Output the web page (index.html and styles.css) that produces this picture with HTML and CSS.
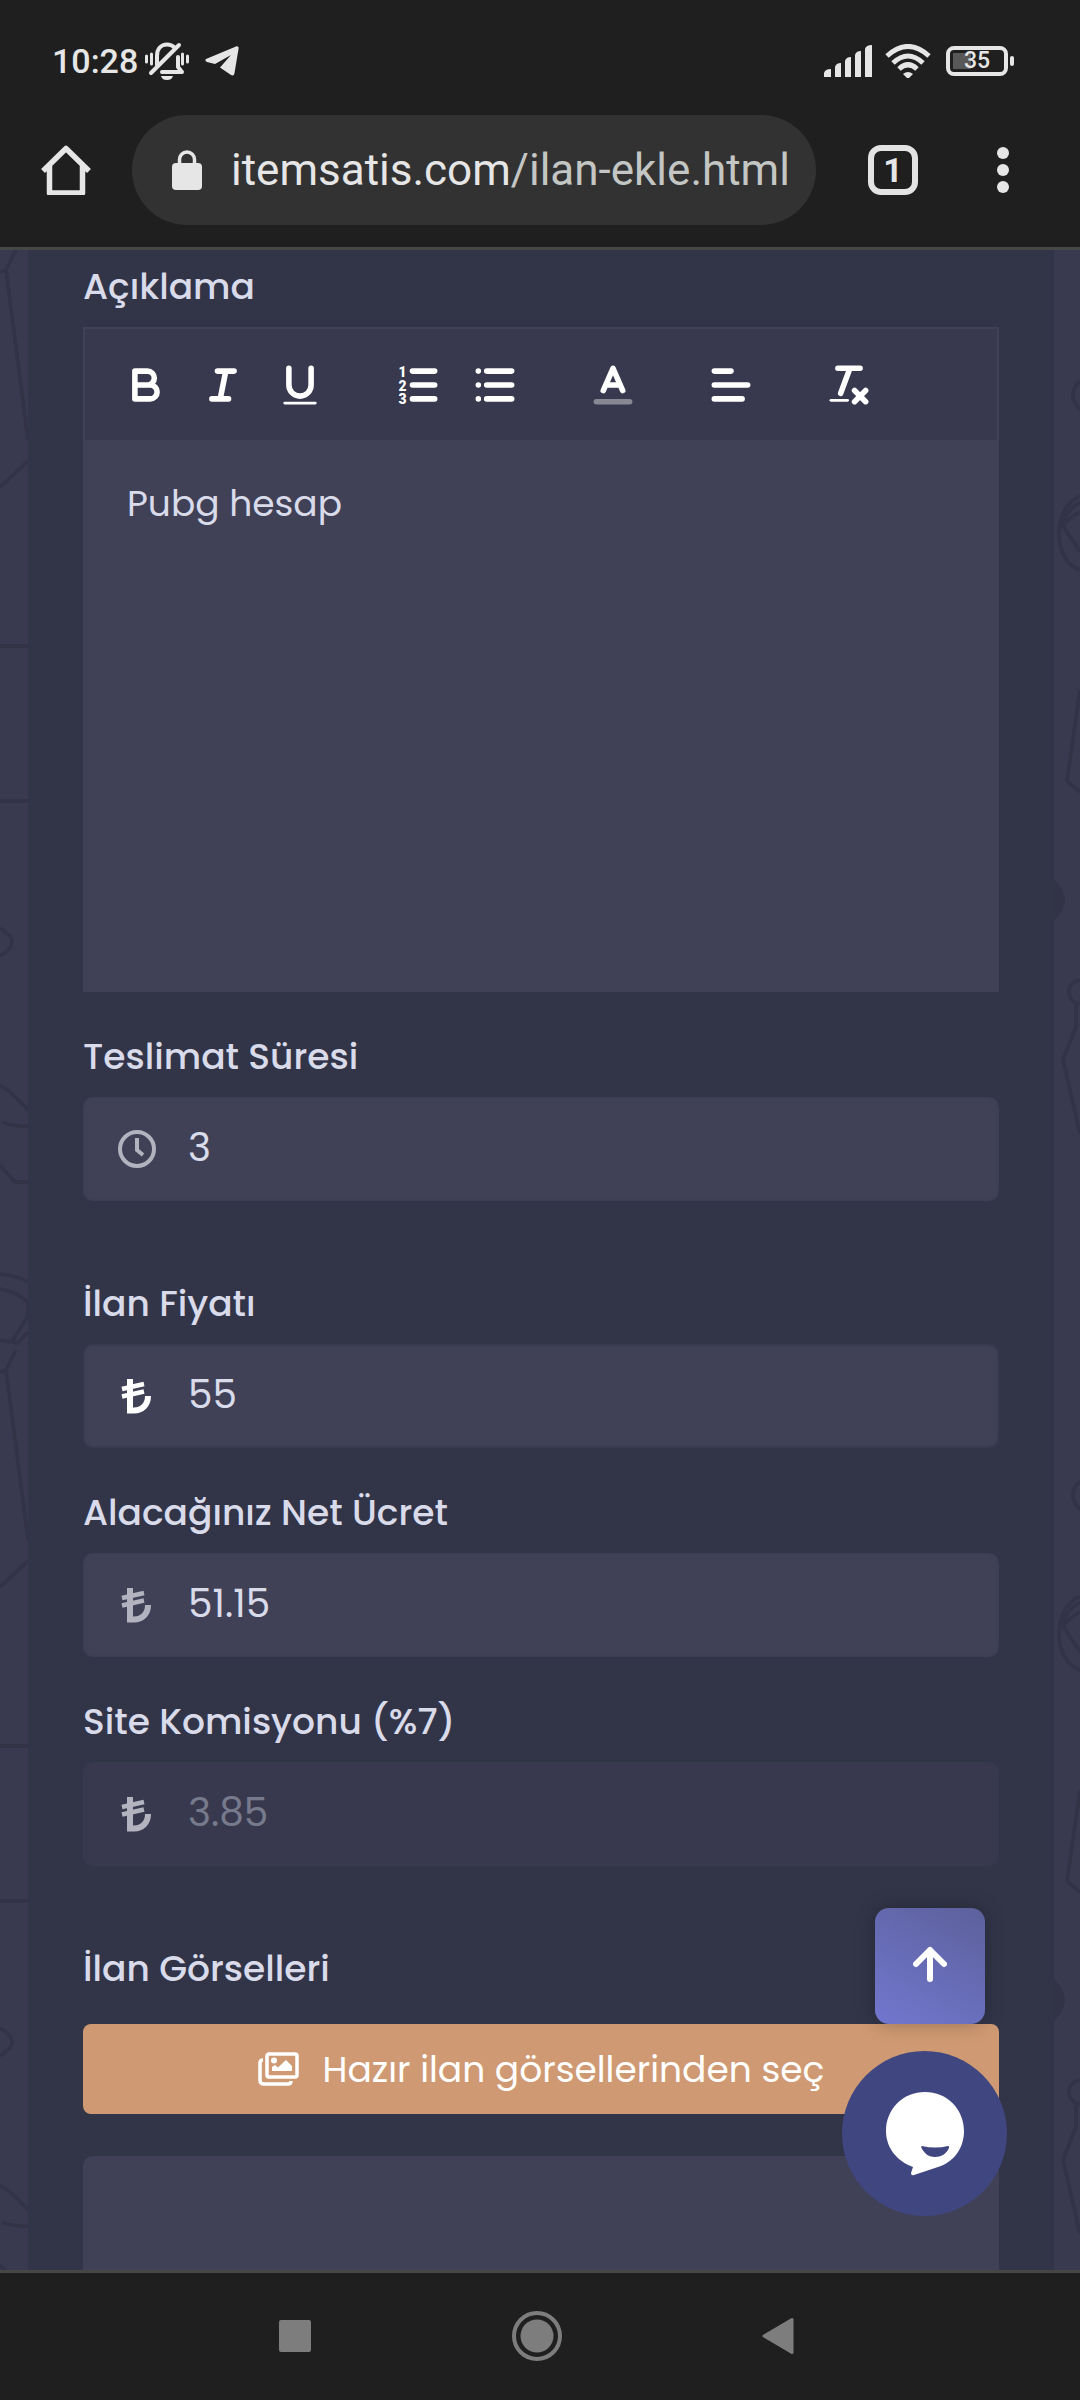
FILE: index.html
```html
<!DOCTYPE html>
<html lang="tr">
<head>
    <meta charset="UTF-8">
    <meta name="viewport" content="width=device-width, initial-scale=1.0">
    <title>İlan Ekle</title>
    <link rel="stylesheet" href="styles.css">
</head>
<body>
    <header class="browser">
        <div class="status-bar">
            <span class="clock">10:28</span>
            <svg class="bell" viewBox="0 0 44 38" width="44" height="38">
                <g fill="none" stroke="currentColor" stroke-width="4" stroke-linecap="round" stroke-linejoin="round">
                    <path d="M12 23V14C12 7 16 2.500 22 2.500C25 2.500 27.500 3.500 29.500 5.500"/>
                    <path d="M6 31L34 3"/>
                    <path d="M17 30H37L33 25V15"/>
                    <path d="M1.500 14V20M6.500 12V22M37.500 12V22M42.500 14V20" stroke-width="3"/>
                </g>
                <path d="M16 34H28C27 37 25 38 22 38S17 37 16 34Z" fill="currentColor"/>
            </svg>
            <svg class="telegram" viewBox="0 0 34 30" width="34" height="30">
                <path d="M1 13L31 .5C33 0 34 1 33.500 3L29.500 27C29 29.500 28 30 26 29L15 21.500L26 9L10 18L2 16C0 15 0 14 1 13Z" fill="currentColor"/>
            </svg>
            <svg class="signal" viewBox="0 0 48 32" width="48" height="32">
                <path d="M0 32V28Q1 24 7 24V32ZM11 32V22Q12 18 17 18V32ZM21 32V16Q22 12 27 12V32ZM31 32V10Q32 6 37 6V32ZM41 32V4Q42 0 48 0V32Z" fill="currentColor"/>
            </svg>
            <svg class="wifi" viewBox="0 0 46 34" width="46" height="34">
                <path d="M2 12Q23-7 44 12M8 19Q23 5 38 19M14 25Q23 16.500 32 25" fill="none" stroke="currentColor" stroke-width="5"/>
                <path d="M18 30Q23 26 28 30L23 35Z" fill="currentColor"/>
            </svg>
            <span class="battery"><span class="battery-text">35</span></span>
        </div>
        <nav class="url-bar">
            <a href="#" aria-label="Ana sayfa">
                <svg viewBox="0 0 50 50" width="50" height="50">
                    <path d="M2 26L25 3.500L48 26M8.500 21V48H41.500V21" fill="none" stroke="currentColor" stroke-width="5.500" stroke-linejoin="round"/>
                </svg>
            </a>
            <a href="#" class="address">
                <svg viewBox="0 0 30 40" width="30" height="40">
                    <rect y="13" width="30" height="27" rx="4" fill="currentColor"/>
                    <path d="M7.500 14V9.500a7.500 7.500 0 0 1 15 0V14" fill="none" stroke="currentColor" stroke-width="3.500"/>
                </svg>
                <span>itemsatis.com<span class="path">/ilan-ekle.html</span></span>
            </a>
            <button type="button" class="tabs">1</button>
            <button type="button" class="more" aria-label="Menü">
                <svg viewBox="0 0 12 46" width="12" height="46" fill="currentColor">
                    <circle cx="6" cy="6" r="6"/>
                    <circle cx="6" cy="23" r="6"/>
                    <circle cx="6" cy="40" r="6"/>
                </svg>
            </button>
        </nav>
    </header>

    <main class="page">
        <svg class="side side-left" aria-hidden="true">
            <defs>
                <pattern id="doodle-left" width="28" height="1100" patternUnits="userSpaceOnUse">
                    <path d="M16 0L6 20L0 22M6 20L28 190M0 237L28 211M0 396H28M0 551H28M0 678Q24 692 0 706M0 836Q8 838 28 860M2 872Q14 877 28 876M0 915L15 932H28M0 1024Q18 1026 28 1032M0 1039Q18 1042 28 1053V1066L11 1093M0 1090L18 1093L28 1082"/>
                </pattern>
            </defs>
            <rect width="100%" height="100%" fill="url(#doodle-left)"/>
        </svg>

        <form class="panel">
            <div class="field">
                <label for="description">Açıklama</label>
                <div class="editor">
                    <div class="toolbar">
                        <div class="tools">
                            <button type="button" aria-label="Kalın">
                                <svg viewBox="0 0 18 18"><path d="M5 4H9.500a2.500 2.500 0 0 1 0 5H5ZM5 9H10.500a2.500 2.500 0 0 1 0 5H5Z"/></svg>
                            </button>
                            <button type="button" aria-label="İtalik">
                                <svg viewBox="0 0 18 18"><path d="M7 4H13M5 14H11M8 14L10 4"/></svg>
                            </button>
                            <button type="button" aria-label="Altı çizili">
                                <svg viewBox="0 0 18 18"><path d="M5 3V9a4 4 0 0 0 8 0V3"/><rect x="3" y="15" width="12" height="1" rx=".5"/></svg>
                            </button>
                        </div>
                        <div class="tools">
                            <button type="button" aria-label="Numaralı liste">
                                <svg viewBox="0 0 18 18"><path d="M7 4H15M7 9H15M7 14H15"/><text x="2" y="6">1</text><text x="2" y="11">2</text><text x="2" y="16">3</text></svg>
                            </button>
                            <button type="button" aria-label="Liste">
                                <svg viewBox="0 0 18 18"><path d="M6 4H15M6 9H15M6 14H15M3 4H3M3 9H3M3 14H3"/></svg>
                            </button>
                        </div>
                        <div class="tools">
                            <button type="button" aria-label="Renk">
                                <svg viewBox="0 0 18 18"><path d="M3 15H15" opacity=".4"/><path d="M5.500 11L9 3L12.500 11M11.630 9H6.380"/></svg>
                            </button>
                        </div>
                        <div class="tools">
                            <button type="button" aria-label="Hizala">
                                <svg viewBox="0 0 18 18"><path d="M3 4H9M3 9H15M3 14H13"/></svg>
                            </button>
                        </div>
                        <div class="tools">
                            <button type="button" aria-label="Biçimi temizle">
                                <svg viewBox="0 0 18 18"><path d="M5 3H13M6 12L9.350 3M11 11L15 15M15 11L11 15"/><rect x="2" y="14" width="7" height="1" rx=".5"/></svg>
                            </button>
                        </div>
                    </div>
                    <textarea id="description">Pubg hesap</textarea>
                </div>
            </div>

            <div class="field">
                <label for="delivery">Teslimat Süresi</label>
                <div class="input-box">
                    <svg viewBox="0 0 38 38" width="38" height="38">
                        <circle cx="19" cy="19" r="17" fill="none" stroke="currentColor" stroke-width="4"/>
                        <path d="M19 8V20L25 25" fill="none" stroke="currentColor" stroke-width="4"/>
                    </svg>
                    <input type="text" id="delivery" value="3">
                </div>
            </div>

            <div class="field spaced">
                <label for="price">İlan Fiyatı</label>
                <div class="input-box active">
                    <svg viewBox="-4 -2 38 38" width="38" height="38"><use href="#lira"/></svg>
                    <input type="text" id="price" value="55">
                </div>
            </div>

            <div class="field">
                <label for="net">Alacağınız Net Ücret</label>
                <div class="input-box">
                    <svg viewBox="-4 -2 38 38" width="38" height="38"><use href="#lira"/></svg>
                    <input type="text" id="net" value="51.15">
                </div>
            </div>

            <div class="field">
                <label for="commission">Site Komisyonu (%7)</label>
                <div class="input-box disabled">
                    <svg viewBox="-4 -2 38 38" width="38" height="38"><use href="#lira"/></svg>
                    <input type="text" id="commission" value="3.85" disabled>
                </div>
            </div>

            <div class="field spaced images">
                <h2>İlan Görselleri</h2>
                <button type="button" class="pick-image">
                    <svg viewBox="0 0 41 34" width="41" height="34">
                        <rect x="9" y="2" width="30" height="23" rx="2" fill="none" stroke="currentColor" stroke-width="3.500"/>
                        <path d="M5 8Q2 8 2 11V28Q2 32 6 32H30Q33 32 33 29" fill="none" stroke="currentColor" stroke-width="3.500"/>
                        <circle cx="16" cy="8.500" r="3" fill="currentColor"/>
                        <path d="M14 19V15L17 13L20 15.500L28 8L34 14V19Z" fill="currentColor"/>
                    </svg>
                    Hazır ilan görsellerinden seç
                </button>
                <div class="dropzone"></div>
            </div>
        </form>

        <svg class="side side-right" aria-hidden="true">
            <defs>
                <pattern id="doodle-right" width="26" height="1100" patternUnits="userSpaceOnUse">
                    <path d="M26 131Q12 144 26 160M26 246Q5 256 5 286Q7 313 26 320M26 252Q10 262 9 276L26 302M26 262Q15 268 9 276M26 440L13 531L26 542M26 730Q14 733 15 743Q16 753 26 754M22 754V777L9 810L26 884"/>
                    <path class="filled" d="M0 632Q18 650 0 668Z"/>
                </pattern>
            </defs>
            <rect width="100%" height="100%" fill="url(#doodle-right)"/>
        </svg>

        <a href="#" class="to-top" aria-label="Yukarı çık">
            <svg viewBox="0 0 34 36" width="34" height="36">
                <path d="M17 33V4M3 18L17 4L31 18" fill="none" stroke="currentColor" stroke-width="6" stroke-linecap="round" stroke-linejoin="round"/>
            </svg>
        </a>
        <button type="button" class="chat" aria-label="Canlı destek">
            <svg viewBox="0 0 78 84" width="78" height="84">
                <path d="M39 0C61 0 78 17 78 39C78 56 68 69 55 74L28 83Q25 84 25 81L27 75C11 69 0 56 0 39C0 17 17 0 39 0Z" fill="currentColor"/>
                <path d="M36 54Q49 57 62 54Q64 54 62.500 57C60 62 55 65 49 65S39 62 36 57Q34.500 54 36 54Z" fill="#404680"/>
            </svg>
        </button>
    </main>

    <nav class="system-nav">
        <button type="button" aria-label="Son uygulamalar">
            <svg viewBox="0 0 50 50"><rect x="9" y="9" width="32" height="32" rx="2"/></svg>
        </button>
        <button type="button" aria-label="Ana ekran">
            <svg viewBox="0 0 50 50"><circle cx="25" cy="25" r="16.500"/><circle cx="25" cy="25" r="23" fill="none" stroke="currentColor" stroke-width="4"/></svg>
        </button>
        <button type="button" aria-label="Geri">
            <svg viewBox="0 0 50 50"><path d="M10 25L38 8.500V41.500Z" stroke="currentColor" stroke-width="3" stroke-linejoin="round"/></svg>
        </button>
    </nav>

    <svg width="0" height="0" class="sprites">
        <symbol id="lira" overflow="visible">
            <path d="M8 0V31.500H12C20 31.500 26 26 26 17" fill="none" stroke="currentColor" stroke-width="6"/>
            <path d="M0 10L22 5M0 17.500L22 12.500" fill="none" stroke="currentColor" stroke-width="4.500"/>
        </symbol>
    </svg>
</body>
</html>
```
FILE: styles.css
```css
* {
    margin: 0;
    padding: 0;
    box-sizing: border-box;
}

body {
    display: flex;
    flex-direction: column;
    height: 100vh;
    background: #393a4f;
    color: #d9dbea;
    font-family: "Poppins", Inter, sans-serif;
    font-size: 36px;
    overflow: hidden;
}

button,
input,
textarea {
    font-family: inherit;
    font-size: inherit;
    color: inherit;
    background: none;
    border: none;
    outline: none;
}

a {
    color: inherit;
    text-decoration: none;
}

svg {
    display: block;
    flex-shrink: 0;
}

.sprites {
    position: absolute;
}

/* Browser */
.browser {
    background: #1f1f1f;
    border-bottom: 3px solid #464846;
    color: #e6e6e6;
    font-family: Roboto, sans-serif;
}

.status-bar {
    display: flex;
    align-items: center;
    height: 115px;
    padding: 6px 66px 0 52px;
}

.clock {
    font-size: 34px;
    font-weight: 500;
}

.bell {
    margin-left: 7px;
}

.telegram {
    margin-left: 16px;
}

.signal {
    margin-left: auto;
}

.wifi {
    margin: 0 15px 0 13px;
}

.battery {
    position: relative;
    display: flex;
    align-items: center;
    justify-content: center;
    width: 62px;
    height: 30px;
    margin-right: 6px;
    border: 4px solid #e6e6e6;
    border-radius: 8px;
    background: linear-gradient(90deg, #585858 18px, transparent 18px) 3px 3px / 48px 16px no-repeat;
    font-size: 23px;
    font-weight: 500;
}

.battery::after {
    content: "";
    position: absolute;
    right: -10px;
    top: 6px;
    width: 4px;
    height: 10px;
    border-radius: 2px;
    background: #e6e6e6;
}

.url-bar {
    display: flex;
    align-items: center;
    padding: 0 71px 22px 41px;
}

.address {
    display: flex;
    flex: 1;
    align-items: center;
    gap: 29px;
    height: 110px;
    margin: 0 52px 0 41px;
    padding-left: 40px;
    border-radius: 55px;
    background: #323232;
    font-size: 44px;
    white-space: nowrap;
}

.path {
    color: #c4c6c4;
}

.tabs {
    width: 50px;
    height: 50px;
    margin-right: 79px;
    border: 6px solid #e3e3e3;
    border-radius: 13px;
    font-size: 34px;
    font-weight: 700;
    line-height: 38px;
}

/* Page */
.page {
    position: relative;
    display: flex;
    flex: 1;
    min-height: 0;
    overflow: hidden;
}

.side {
    height: 100%;
}

.side-left {
    width: 28px;
}

.side-right {
    width: 26px;
}

.side path {
    fill: none;
    stroke: #323347;
    stroke-width: 4;
}

.side .filled {
    fill: #323347;
}

.panel {
    display: flex;
    flex: 1;
    flex-direction: column;
    gap: 38px;
    padding: 10px 55px 0;
    background: #323548;
}

.spaced {
    margin-top: 38px;
}

label,
h2 {
    display: block;
    margin-bottom: 13px;
    font-size: 36px;
    font-weight: 500;
    line-height: 54px;
}

.editor {
    display: flex;
    flex-direction: column;
    height: 665px;
    border: 2px solid #404156;
    background: #404156;
}

.toolbar {
    display: flex;
    align-items: center;
    gap: 41px;
    height: 111px;
    padding: 0 22px;
    background: #38394e;
}

.tools {
    display: flex;
}

.tools button {
    display: flex;
    justify-content: center;
    width: 77px;
    color: #fff;
}

.tools svg {
    width: 50px;
    height: 50px;
    fill: none;
    stroke: currentColor;
    stroke-width: 2;
    stroke-linecap: round;
    stroke-linejoin: round;
}

.tools rect,
.tools text {
    fill: currentColor;
    stroke: none;
}

.tools text {
    font-family: Roboto, sans-serif;
    font-size: 5px;
    font-weight: 900;
}

textarea {
    flex: 1;
    padding: 37px 42px;
    line-height: 54px;
    resize: none;
}

.input-box {
    display: flex;
    align-items: center;
    gap: 32px;
    height: 104px;
    padding: 0 33px;
    border: 2px solid #3d3f54;
    border-radius: 10px;
    background: #404156;
    color: #b3b3bf;
}

.input-box input {
    flex: 1;
    min-width: 0;
    padding-bottom: 4px;
    color: #d9dbea;
    font-size: 39px;
}

.input-box.active {
    border-color: #393b50;
    color: #fff;
}

.input-box.disabled {
    border-color: #37394d;
    background: #38394e;
}

.input-box.disabled input {
    color: #777a8d;
}

.images {
    display: flex;
    flex: 1;
    flex-direction: column;
}

.images h2 {
    margin-bottom: 28px;
}

.pick-image {
    position: relative;
    display: flex;
    align-items: center;
    justify-content: center;
    gap: 24px;
    height: 90px;
    border-radius: 8px;
    background: #cf9a73;
    color: #fff;
}

.dropzone {
    flex: 1;
    margin-top: 42px;
    border-radius: 10px 10px 0 0;
    background: #404156;
}

/* Floating buttons */
.to-top,
.chat {
    position: absolute;
    display: flex;
    align-items: center;
    justify-content: center;
    color: #fff;
}

.to-top {
    right: 95px;
    bottom: 246px;
    width: 110px;
    height: 116px;
    padding-bottom: 4px;
    border-radius: 14px;
    background: linear-gradient(30deg, #7277cf, #5c609b);
    box-shadow: 0 0 20px rgba(0, 0, 0, 0.25);
}

.chat {
    right: 73px;
    bottom: 54px;
    width: 165px;
    height: 165px;
    border-radius: 50%;
    background: #404680;
}

/* System navigation */
.system-nav {
    display: flex;
    align-items: center;
    justify-content: center;
    gap: 192px;
    height: 130px;
    padding: 0 6px 2px 0;
    border-top: 3px solid #464646;
    background: #1f1f1f;
    color: #7d7d7d;
}

.system-nav svg {
    width: 50px;
    height: 50px;
    fill: currentColor;
}
```
